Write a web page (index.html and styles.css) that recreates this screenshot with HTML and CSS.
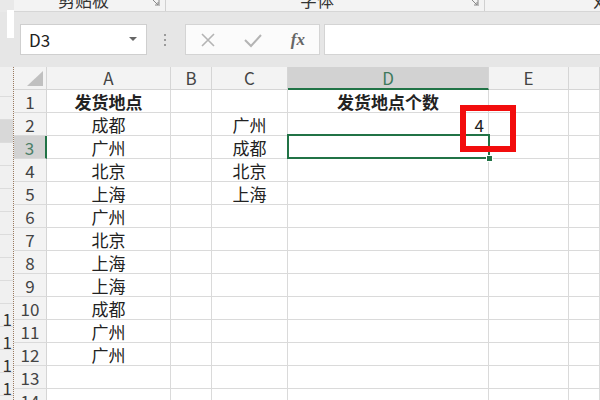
FILE: index.html
```html
<!DOCTYPE html>
<html>
<head>
<meta charset="utf-8">
<link rel="stylesheet" href="styles.css">
</head>
<body>
<div class="app">
  <div class="edge-top"><div class="ghost"></div></div>
  <div class="ribbon">
    <div class="group g1"><span class="glabel">剪贴板</span><svg class="launch" width="10" height="10" viewBox="0 0 10 10"><path d="M1 2 H8 V9 M2 3 L7 8 M7 5 V8 H4" fill="none" stroke="#888" stroke-width="1"/></svg></div>
    <div class="group g2"><span class="glabel">字体</span><svg class="launch" width="10" height="10" viewBox="0 0 10 10"><path d="M1 2 H8 V9 M2 3 L7 8 M7 5 V8 H4" fill="none" stroke="#888" stroke-width="1"/></svg></div>
    <div class="group g3"><span class="glabel">对齐方式</span></div>
  </div>
  <div class="edge-mid"></div>
  <div class="fbar">
    <div class="namebox"><span>D3</span><svg width="8" height="5" viewBox="0 0 8 5"><path d="M0 0 H8 L4 4 Z" fill="#666"/></svg></div>
    <div class="dots"><i></i><i></i><i></i></div>
    <div class="fbtns">
      <svg width="16" height="16" viewBox="0 0 16 16"><path d="M2 2 L14 14 M14 2 L2 14" stroke="#b4b4b4" stroke-width="1.6" fill="none"/></svg>
      <svg width="18" height="16" viewBox="0 0 18 16"><path d="M1 8 L7 14 L17 3" stroke="#b4b4b4" stroke-width="2" fill="none"/></svg>
      <span class="fx">fx</span>
    </div>
    <div class="finput"></div>
  </div>
  <div class="edge-rows">
    <div class="er"></div><div class="er"></div><div class="er dark"></div><div class="er"></div><div class="er"></div><div class="er"></div><div class="er"></div><div class="er"></div><div class="er"></div><div class="er"></div><div class="er num">1</div><div class="er num">1</div><div class="er num">1</div><div class="er num">1</div><div class="er num">1</div>
  </div>
  <div class="sheet">
    <div class="hd corner"><svg width="16" height="15" viewBox="0 0 16 15"><path d="M16 0 V15 H0 Z" fill="#c0c0c0"/></svg></div>
    <div class="hd">A</div><div class="hd">B</div><div class="hd">C</div><div class="hd colsel">D</div><div class="hd">E</div><div class="hd"></div>

    <div class="rh">1</div><div class="c b">发货地点</div><div class="c"></div><div class="c"></div><div class="c b">发货地点个数</div><div class="c"></div><div class="c"></div>
    <div class="rh">2</div><div class="c">成都</div><div class="c"></div><div class="c">广州</div><div class="c r">4</div><div class="c"></div><div class="c"></div>
    <div class="rh rowsel">3</div><div class="c">广州</div><div class="c"></div><div class="c">成都</div><div class="c active"></div><div class="c"></div><div class="c"></div>
    <div class="rh">4</div><div class="c">北京</div><div class="c"></div><div class="c">北京</div><div class="c"></div><div class="c"></div><div class="c"></div>
    <div class="rh">5</div><div class="c">上海</div><div class="c"></div><div class="c">上海</div><div class="c"></div><div class="c"></div><div class="c"></div>
    <div class="rh">6</div><div class="c">广州</div><div class="c"></div><div class="c"></div><div class="c"></div><div class="c"></div><div class="c"></div>
    <div class="rh">7</div><div class="c">北京</div><div class="c"></div><div class="c"></div><div class="c"></div><div class="c"></div><div class="c"></div>
    <div class="rh">8</div><div class="c">上海</div><div class="c"></div><div class="c"></div><div class="c"></div><div class="c"></div><div class="c"></div>
    <div class="rh">9</div><div class="c">上海</div><div class="c"></div><div class="c"></div><div class="c"></div><div class="c"></div><div class="c"></div>
    <div class="rh">10</div><div class="c">成都</div><div class="c"></div><div class="c"></div><div class="c"></div><div class="c"></div><div class="c"></div>
    <div class="rh">11</div><div class="c">广州</div><div class="c"></div><div class="c"></div><div class="c"></div><div class="c"></div><div class="c"></div>
    <div class="rh">12</div><div class="c">广州</div><div class="c"></div><div class="c"></div><div class="c"></div><div class="c"></div><div class="c"></div>
    <div class="rh">13</div><div class="c"></div><div class="c"></div><div class="c"></div><div class="c"></div><div class="c"></div><div class="c"></div>
    <div class="rh">14</div><div class="c"></div><div class="c"></div><div class="c"></div><div class="c"></div><div class="c"></div><div class="c"></div>

    <div class="mark"></div>
  </div>
</div>
</body>
</html>
```
FILE: styles.css
```css
html, body {
  margin: 0;
  padding: 0;
}
body {
  width: 600px;
  height: 400px;
  overflow: hidden;
  background: #e6e6e6;
  font-family: "Noto Sans CJK SC", "Noto Sans", sans-serif;
}
.app {
  display: grid;
  grid-template-columns: 14px 586px;
  grid-template-rows: 12px 55px 333px;
  height: 400px;
}
.edge-top {
  grid-row: 1;
  grid-column: 1;
  background: #e9e9e9;
  overflow: visible;
  position: relative;
  z-index: 2;
}
.ghost {
  margin: 10px 0 0 7px;
  width: 7px;
  height: 28px;
  background: #fff;
}
.edge-mid {
  grid-row: 2;
  grid-column: 1;
  background: #e6e6e6;
}
.ribbon {
  grid-row: 1;
  grid-column: 2;
  background: #f3f3f3;
  border-bottom: 1px solid #d6d6d6;
  box-sizing: border-box;
  display: flex;
  overflow: hidden;
}
.group {
  display: flex;
  align-items: flex-start;
  box-sizing: border-box;
  height: 11px;
  flex-shrink: 0;
}
.g1 { width: 152px; border-right: 1px solid #d0d0d0; padding-left: 44px; }
.g2 { width: 319px; border-right: 1px solid #d0d0d0; padding-left: 134px; }
.g3 { flex: 1 1 0; min-width: 0; overflow: hidden; padding-left: 108px; }
.glabel {
  font-size: 17px;
  line-height: 17px;
  margin-top: -9px;
  color: #333;
  white-space: nowrap;
}
.launch {
  margin-left: auto;
  margin-right: 4px;
  margin-top: -3px;
}
.fbar {
  grid-row: 2;
  grid-column: 2;
  display: flex;
  align-items: center;
  padding-left: 6px;
  background: #e6e6e6;
}
.namebox {
  width: 127px;
  height: 31px;
  box-sizing: border-box;
  background: #fff;
  border: 1px solid #cfcfcf;
  display: flex;
  align-items: center;
  justify-content: space-between;
  padding: 0 9px 0 8px;
  font-size: 17px;
  color: #222;
}
.dots {
  width: 4px;
  margin: 0 18px 0 16px;
  display: flex;
  flex-direction: column;
  align-items: center;
  gap: 3px;
}
.dots i {
  width: 2px;
  height: 2px;
  background: #9a9a9a;
}
.fbtns {
  width: 135px;
  height: 31px;
  box-sizing: border-box;
  background: #fbfbfb;
  border: 1px solid #d4d4d4;
  display: flex;
  align-items: center;
  justify-content: space-between;
  padding: 0 14px 0 14px;
  margin-right: 4px;
}
.fx {
  font-family: "Liberation Serif", serif;
  font-style: italic;
  font-weight: bold;
  font-size: 17px;
  color: #666;
}
.finput {
  flex: 1;
  height: 31px;
  box-sizing: border-box;
  background: #fff;
  border: 1px solid #d4d4d4;
  border-right: none;
}
.edge-rows {
  grid-row: 3;
  grid-column: 1;
  background: #f0f0f0;
  display: grid;
  grid-auto-rows: 23px;
  border-right: 1px dotted #9a7a60;
  box-sizing: border-box;
  padding-top: 7px;
  overflow: hidden;
}
.er {
  border-bottom: 1px solid #dcdcdc;
  box-sizing: border-box;
}
.er.dark {
  background: #d8d8d8;
}
.er.num {
  font-size: 17px;
  line-height: 30px;
  color: #333;
  text-align: right;
  padding-right: 1px;
  overflow: hidden;
}
.sheet {
  grid-row: 3;
  grid-column: 2;
  position: relative;
  background: #fff;
  display: grid;
  grid-template-columns: 33px 124px 41px 76px 201px 80px 31px;
  grid-auto-rows: 23px;
  overflow: hidden;
}
.hd {
  background: #f3f3f3;
  border-right: 1px solid #d5d5d5;
  border-bottom: 1px solid #d5d5d5;
  box-sizing: border-box;
  text-align: center;
  font-size: 17px;
  line-height: 22px;
  color: #444;
}
.corner {
  display: flex;
  align-items: flex-end;
  justify-content: flex-end;
  padding: 0 3px 3px 0;
}
.colsel {
  background: #d2d2d2;
  color: #3d7a5c;
  border-bottom: 2px solid #217346;
}
.rh {
  background: #f3f3f3;
  border-right: 1px solid #d5d5d5;
  border-bottom: 1px solid #dadada;
  box-sizing: border-box;
  text-align: center;
  font-size: 17px;
  line-height: 23px;
  color: #444;
}
.rowsel {
  background: #d2d2d2;
  color: #4d7f68;
  border-right: 2px solid #217346;
}
.c {
  border-right: 1px solid #dadada;
  border-bottom: 1px solid #dadada;
  box-sizing: border-box;
  text-align: center;
  font-size: 17px;
  line-height: 23px;
  color: #222;
  white-space: nowrap;
}
.b {
  font-weight: bold;
}
.r {
  text-align: right;
  padding-right: 4px;
}
.active {
  position: relative;
}
.active::after {
  content: "";
  position: absolute;
  left: -1px;
  top: -2px;
  right: -2px;
  bottom: -1px;
  border: 2px solid #217346;
}
.active::before {
  content: "";
  position: absolute;
  right: -5px;
  bottom: -4px;
  width: 5px;
  height: 5px;
  background: #217346;
  border: 1px solid #fff;
  z-index: 1;
}
.mark {
  position: absolute;
  left: 446px;
  top: 38px;
  width: 56px;
  height: 47px;
  box-sizing: border-box;
  border: 6px solid #f20d0d;
}
```
